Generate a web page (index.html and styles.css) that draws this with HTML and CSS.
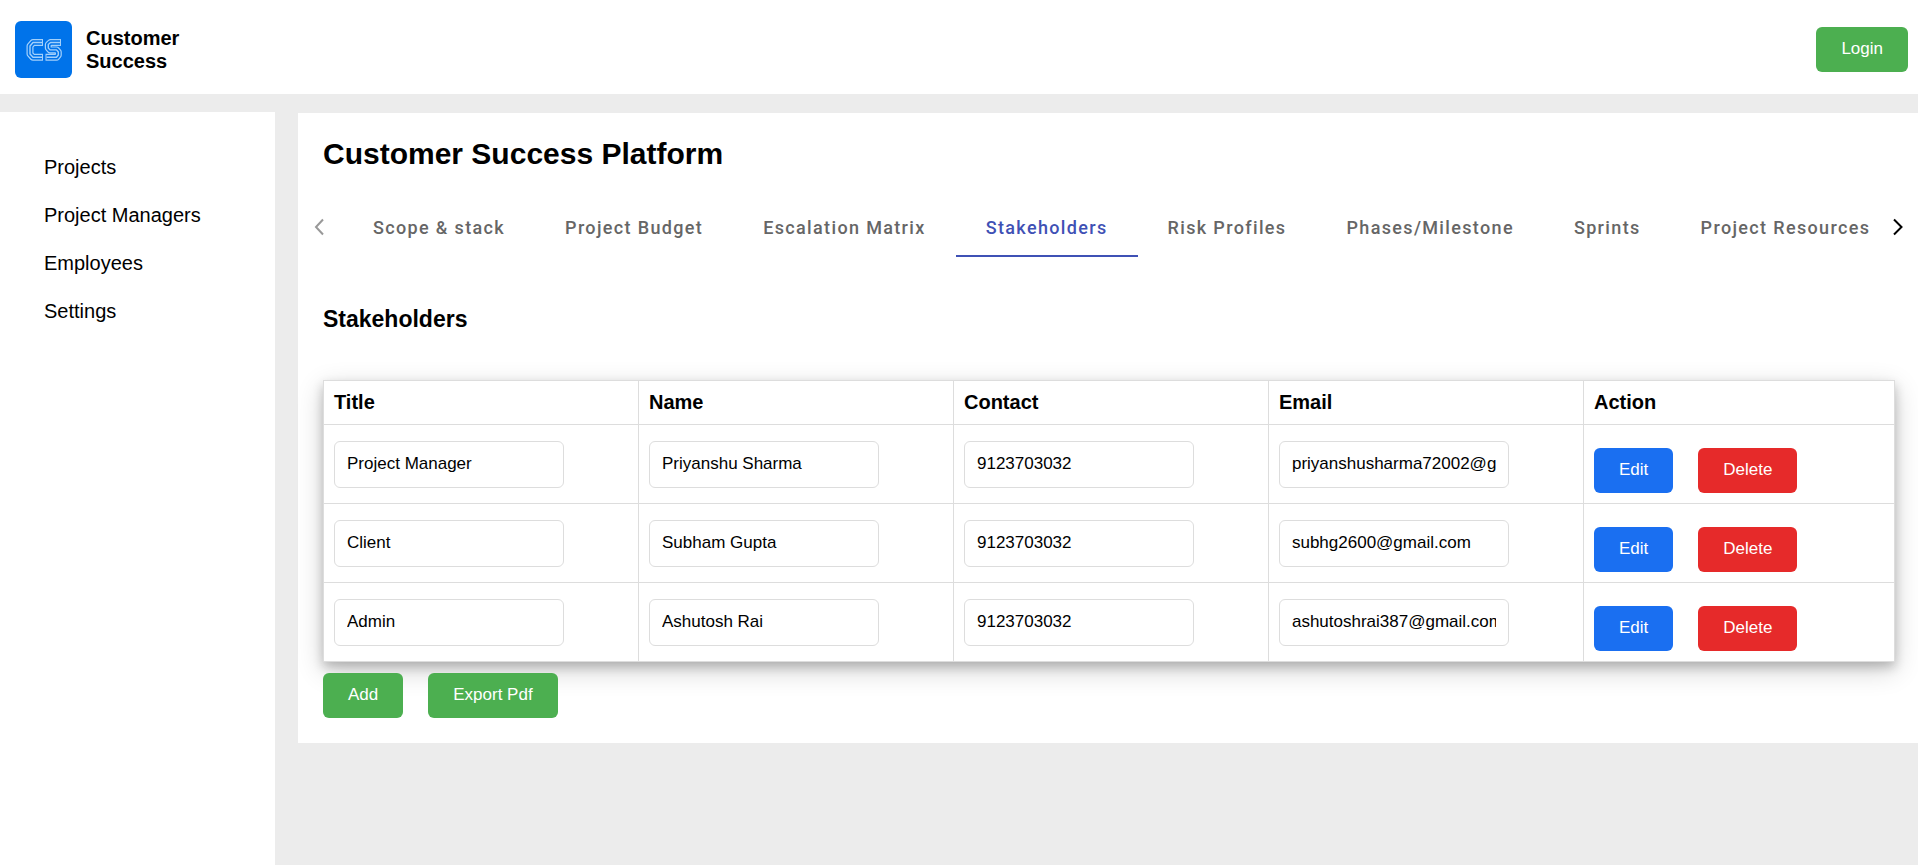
FILE: index.html
```html
<!DOCTYPE html>
<html lang="en">
<head>
<meta charset="utf-8">
<title>Customer Success Platform</title>
<link rel="stylesheet" href="styles.css">
</head>
<body>
<header class="topbar">
  <div class="brand">
    <svg class="logo" viewBox="0 0 57 57" aria-hidden="true">
      <rect width="57" height="57" rx="6" fill="#0073ea"/>
      <g fill="none" stroke-linejoin="round">
        <path d="M28 21.500H18L15 25V33L18 36.300H28M46 21.500H35.500L33.300 23.500V27L35 28.900H41.500L43.300 31V34L41.500 36.300H30.500" stroke="#a3d0fb" stroke-width="7"/>
        <path d="M27 21.500H18L15 25V33L18 36.300H27M45 21.500H35.500L33.300 23.500V27L35 28.900H41.500L43.300 31V34L41.500 36.300H31.500" stroke="#0073ea" stroke-width="4.600"/>
        <path d="M27 21.500H18L15 25V33L18 36.300H27M45 21.500H35.500L33.300 23.500V27L35 28.900H41.500L43.300 31V34L41.500 36.300H31.500" stroke="#a3d0fb" stroke-width="1.400"/>
      </g>
    </svg>
    <span class="brand-name">Customer<br>Success</span>
  </div>
  <button class="btn btn-green" type="button">Login</button>
</header>
<div class="layout">
  <nav class="sidebar">
    <a href="#">Projects</a>
    <a href="#">Project Managers</a>
    <a href="#">Employees</a>
    <a href="#">Settings</a>
  </nav>
  <main class="content">
    <h1>Customer Success Platform</h1>
    <div class="tabs">
      <button class="pager pager-prev" type="button" aria-label="Previous tabs"><svg width="12" height="18" viewBox="0 0 12 18"><path d="M10 1.500L3 9l7 7.500"/></svg></button>
      <div class="tab-list" role="tablist">
        <button class="tab" role="tab" type="button">Scope &amp; stack</button>
        <button class="tab" role="tab" type="button">Project Budget</button>
        <button class="tab" role="tab" type="button">Escalation Matrix</button>
        <button class="tab tab-active" role="tab" type="button" aria-selected="true">Stakeholders</button>
        <button class="tab" role="tab" type="button">Risk Profiles</button>
        <button class="tab" role="tab" type="button">Phases/Milestone</button>
        <button class="tab" role="tab" type="button">Sprints</button>
        <button class="tab" role="tab" type="button">Project Resources</button>
      </div>
      <button class="pager pager-next" type="button" aria-label="Next tabs"><svg width="12" height="18" viewBox="0 0 12 18"><path d="M2 1.500l7.500 7.500-7.500 7.500"/></svg></button>
    </div>
    <section class="panel">
      <h2>Stakeholders</h2>
      <table>
        <thead>
          <tr><th>Title</th><th>Name</th><th>Contact</th><th>Email</th><th class="col-action">Action</th></tr>
        </thead>
        <tbody>
          <tr>
            <td><input type="text" aria-label="Title" value="Project Manager"></td>
            <td><input type="text" aria-label="Name" value="Priyanshu Sharma"></td>
            <td><input type="text" aria-label="Contact" value="9123703032"></td>
            <td><input type="text" aria-label="Email" value="priyanshusharma72002@gmail.com"></td>
            <td><div class="actions"><button class="btn btn-blue" type="button">Edit</button><button class="btn btn-red" type="button">Delete</button></div></td>
          </tr>
          <tr>
            <td><input type="text" aria-label="Title" value="Client"></td>
            <td><input type="text" aria-label="Name" value="Subham Gupta"></td>
            <td><input type="text" aria-label="Contact" value="9123703032"></td>
            <td><input type="text" aria-label="Email" value="subhg2600@gmail.com"></td>
            <td><div class="actions"><button class="btn btn-blue" type="button">Edit</button><button class="btn btn-red" type="button">Delete</button></div></td>
          </tr>
          <tr>
            <td><input type="text" aria-label="Title" value="Admin"></td>
            <td><input type="text" aria-label="Name" value="Ashutosh Rai"></td>
            <td><input type="text" aria-label="Contact" value="9123703032"></td>
            <td><input type="text" aria-label="Email" value="ashutoshrai387@gmail.com"></td>
            <td><div class="actions"><button class="btn btn-blue" type="button">Edit</button><button class="btn btn-red" type="button">Delete</button></div></td>
          </tr>
        </tbody>
      </table>
      <div class="footer-actions">
        <button class="btn btn-green" type="button">Add</button>
        <button class="btn btn-green" type="button">Export Pdf</button>
      </div>
    </section>
  </main>
</div>
</body>
</html>
```
FILE: styles.css
```css
* { box-sizing: border-box; }

body {
  margin: 0;
  min-height: 100vh;
  display: flex;
  flex-direction: column;
  background: #ececec;
  color: #000;
  font-family: "Liberation Sans", Arial, sans-serif;
  font-size: 20px;
}

.topbar {
  display: flex;
  align-items: center;
  justify-content: space-between;
  padding: 21px 10px 16px 15px;
  background: #fff;
}

.brand { display: flex; align-items: center; gap: 14px; }
.logo { width: 57px; height: 57px; }
.brand-name { font-weight: 700; line-height: 23px; }

.btn {
  padding: 13px 25px 14px;
  border: 0;
  border-radius: 6px;
  color: #fff;
  font-family: inherit;
  font-size: 17px;
  line-height: 18px;
  cursor: pointer;
}
.btn-green { background: #4caf50; }
.btn-blue { background: #1a6ff1; }
.btn-red { background: #e62a2a; }

.layout { flex: 1; display: flex; align-items: flex-start; gap: 23px; padding-top: 18px; }

.sidebar {
  align-self: stretch;
  flex: 0 0 275px;
  display: flex;
  flex-direction: column;
  padding: 31px 44px;
  background: #fff;
}
.sidebar a { color: inherit; line-height: 48px; text-decoration: none; }

.content { flex: 1; min-width: 0; margin-top: 1px; background: #fff; }

h1 { margin: 23px 25px 26px; font-size: 30px; line-height: 35px; }

.tabs { display: flex; height: 60px; }
.tab-list { flex: 1; min-width: 0; display: flex; overflow: hidden; }
.tab {
  flex: none;
  padding: 2px 30px 0;
  border: 0;
  border-bottom: 2px solid transparent;
  background: none;
  color: #666;
  font-family: Roboto, sans-serif;
  font-size: 18px;
  font-weight: 500;
  letter-spacing: 0.075em;
  cursor: pointer;
}
.tab-active { border-color: #3f51b5; color: #3f51b5; }

.pager { flex: 0 0 45px; padding: 0; border: 0; background: none; cursor: pointer; }
.pager svg { display: block; margin: auto; fill: none; stroke: #000; stroke-width: 2; }
.pager-prev { padding-right: 4px; }
.pager-prev svg { stroke: #999; }
.pager-next { padding-left: 5px; }

.panel { padding: 49px 23px 25px 25px; }
h2 { margin: 0 0 47px; font-size: 23px; line-height: 27px; }

table {
  width: 100%;
  border-collapse: collapse;
  table-layout: fixed;
  box-shadow: 0 5px 10px rgba(0, 0, 0, 0.2), 0 8px 25px rgba(0, 0, 0, 0.19);
}
th, td { padding: 10px; border: 1px solid #ddd; text-align: left; }
th { line-height: 23px; }
.col-action { width: 19.8%; }

input {
  display: block;
  width: 230px;
  padding: 13px 12px 14px;
  border: 1px solid #ddd;
  border-radius: 6px;
  font-family: inherit;
  font-size: 17px;
  line-height: 18px;
}

.actions { display: flex; gap: 25px; padding-top: 13px; }
.footer-actions { display: flex; gap: 25px; margin-top: 11px; }
```
